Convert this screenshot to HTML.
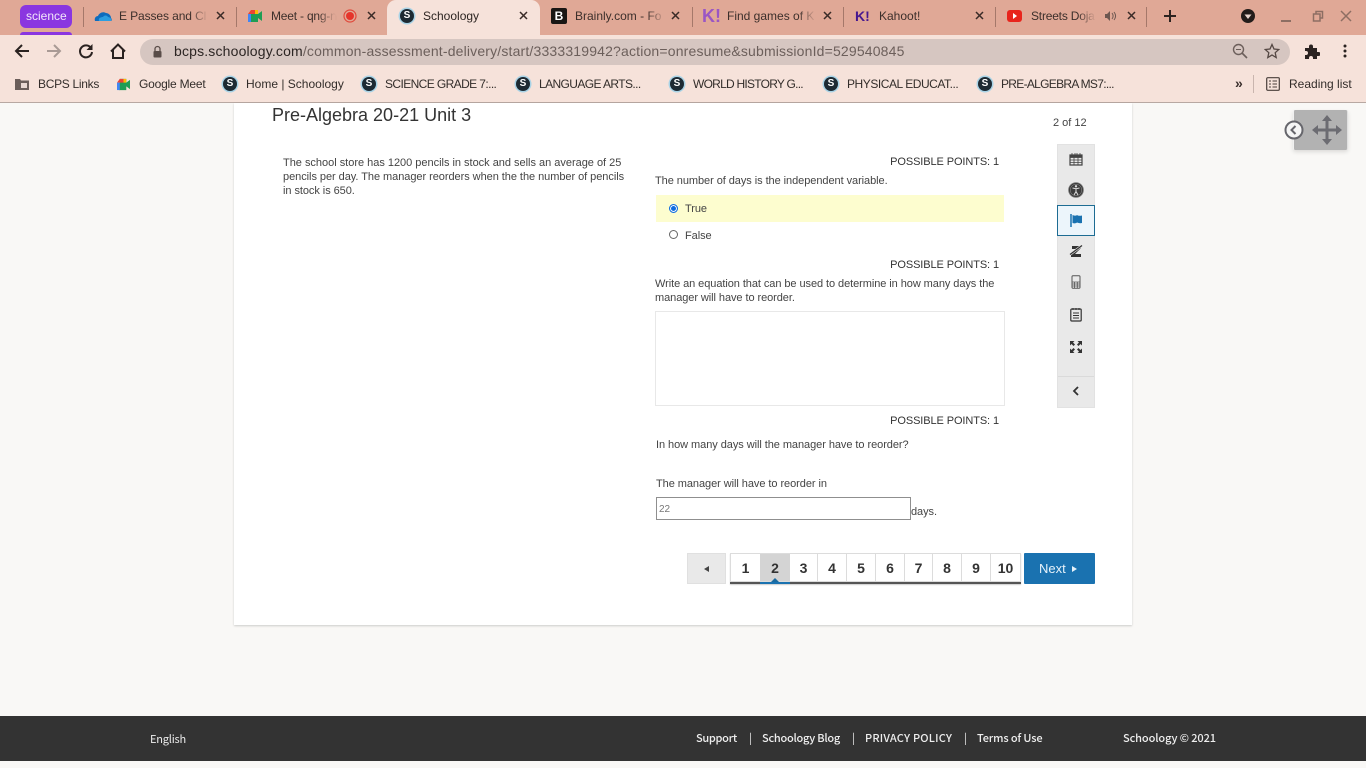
<!DOCTYPE html>
<html lang="en">
<head>
<meta charset="utf-8">
<title>Schoology</title>
<style>
*{box-sizing:border-box}
html,body{margin:0;padding:0;width:1366px;height:768px;overflow:hidden;background:#f9f8f6;font-family:"Liberation Sans",sans-serif;color:#333}
.a,.t,svg.i{position:absolute}
.t{white-space:nowrap;line-height:14px}
.tab{font-size:12px;color:#3c2f2b;top:9px}
.fade{position:absolute;top:4px;width:18px;height:24px;background:linear-gradient(to right,rgba(224,168,150,0),#e0a896)}
.x{position:absolute;top:10px;width:11px;height:11px}
.sep{position:absolute;top:7px;width:1px;height:20px;background:#a5786a}
.bm{font-size:12px;color:#332d2a;top:77px}
.s{position:absolute;width:14px;height:14px;border-radius:50%;background:#1d2a33;box-shadow:0 0 0 1.5px #a9d3e6;color:#fff;font:bold 10px/14px "Liberation Sans",sans-serif;text-align:center}
.q{font-size:11px;color:#444;line-height:14px;letter-spacing:-.06px}
.pp{font-size:11px;color:#333;text-align:right;left:800px;width:199px;letter-spacing:-.1px}
.pg{position:absolute;top:553px;height:29px;background:#fff;border:1px solid #dcdcdc;border-left:0;font:bold 14px/29px "Liberation Sans",sans-serif;color:#333;text-align:center}
.f{font:500 11px/14px "Noto Sans CJK JP","Liberation Sans",sans-serif;color:#eee;position:absolute;top:731px;white-space:nowrap}
</style>
</head>
<body>
<!-- tab strip -->
<div class="a" style="left:0;top:0;width:1366px;height:35px;background:#e0a896"></div>
<div class="a" style="left:20px;top:5px;width:52px;height:23px;border-radius:6px;background:#8a36e0"></div>
<div class="a" style="left:20px;top:32px;width:52px;height:3px;border-radius:3px 3px 0 0;background:#8a36e0"></div>
<div class="t" style="left:26px;top:9px;font-size:12px;color:#f3e6fb">science</div>
<div class="sep" style="left:83px"></div>
<svg class="i" style="left:94px;top:10px" width="18" height="12" viewBox="0 0 18 12"><path d="M1 11c-1-3 1-5 3-5 1-3 5-5 8-3 2 0 5 2 5 5 1 1 1 3 0 3z" fill="#0f6cbd"/><path d="M5 11c-1-3 2-4 4-4 1-2 4-2 5 0 2 0 4 2 3 4z" fill="#2c9ee0"/></svg>
<div class="t tab" style="left:119px;letter-spacing:-.1px">E Passes and Cl</div><div class="fade" style="left:190px"></div>
<svg class="x" style="left:215px" viewBox="0 0 11 11"><path d="M2 2l7 7M9 2l-7 7" stroke="#3a2b27" stroke-width="1.5"/></svg>
<div class="sep" style="left:236px"></div>
<svg class="i" style="left:247px;top:9px" width="16" height="14" viewBox="0 0 16 14"><path d="M4 1h7v4l4-3v10l-4-3v4H3z" fill="#1f9d55"/><path d="M4 1h4v4H1z" fill="#ea4335"/><path d="M8 1h3v4H8z" fill="#fbbc04"/><path d="M1 5h3v8H1z" fill="#4285f4"/></svg>
<div class="t tab" style="left:271px;letter-spacing:-.2px">Meet - qng-n</div><div class="fade" style="left:318px"></div>
<svg class="i" style="left:343px;top:9px" width="14" height="14" viewBox="0 0 14 14"><circle cx="7" cy="7" r="6" fill="none" stroke="#e04a3c" stroke-width="1.2"/><circle cx="7" cy="7" r="4" fill="#e5352b"/></svg>
<svg class="x" style="left:366px" viewBox="0 0 11 11"><path d="M2 2l7 7M9 2l-7 7" stroke="#3a2b27" stroke-width="1.5"/></svg>
<div class="a" style="left:387px;top:0;width:153px;height:36px;background:#f6e2da;border-radius:9px 9px 0 0"></div>
<div class="s" style="left:400px;top:9px">S</div>
<div class="t tab" style="left:423px;color:#2d2522">Schoology</div>
<svg class="x" style="left:518px" viewBox="0 0 11 11"><path d="M2 2l7 7M9 2l-7 7" stroke="#3a2b27" stroke-width="1.5"/></svg>
<div class="a" style="left:551px;top:8px;width:16px;height:16px;background:#1a1614;border-radius:2px;color:#fff;font:bold 12px/16px 'Liberation Sans',sans-serif;text-align:center">B</div>
<div class="t tab" style="left:575px">Brainly.com - Fo</div><div class="fade" style="left:647px"></div>
<svg class="x" style="left:670px" viewBox="0 0 11 11"><path d="M2 2l7 7M9 2l-7 7" stroke="#3a2b27" stroke-width="1.5"/></svg>
<div class="sep" style="left:692px"></div>
<div class="t" style="left:702px;top:7px;font:bold 18px/18px 'Liberation Sans',sans-serif;color:#9a56c4">K!</div>
<div class="t tab" style="left:727px">Find games of K</div><div class="fade" style="left:798px"></div>
<svg class="x" style="left:822px" viewBox="0 0 11 11"><path d="M2 2l7 7M9 2l-7 7" stroke="#3a2b27" stroke-width="1.5"/></svg>
<div class="sep" style="left:843px"></div>
<div class="t" style="left:855px;top:9px;font:bold 14px/14px 'Liberation Sans',sans-serif;color:#46178f">K!</div>
<div class="t tab" style="left:879px">Kahoot!</div>
<svg class="x" style="left:974px" viewBox="0 0 11 11"><path d="M2 2l7 7M9 2l-7 7" stroke="#3a2b27" stroke-width="1.5"/></svg>
<div class="sep" style="left:995px"></div>
<svg class="i" style="left:1007px;top:10px" width="15" height="12" viewBox="0 0 15 12"><rect width="15" height="12" rx="3" fill="#e8241c"/><path d="M6 3l4 3-4 3z" fill="#fff"/></svg>
<div class="t tab" style="left:1031px;letter-spacing:-.2px">Streets Doja</div><div class="fade" style="left:1078px"></div>
<svg class="i" style="left:1104px;top:10px" width="13" height="12" viewBox="0 0 13 12"><path d="M1 4h2l3-3v10L3 8H1z" fill="#6d5750"/><path d="M8 3c1.500 2 1.500 4 0 6M10 2c2 2.500 2 5.500 0 8" stroke="#6d5750" fill="none"/></svg>
<svg class="x" style="left:1126px" viewBox="0 0 11 11"><path d="M2 2l7 7M9 2l-7 7" stroke="#3a2b27" stroke-width="1.5"/></svg>
<div class="sep" style="left:1146px"></div>
<svg class="i" style="left:1163px;top:9px" width="14" height="14" viewBox="0 0 14 14"><path d="M7 1v12M1 7h12" stroke="#2c2320" stroke-width="2"/></svg>
<svg class="i" style="left:1241px;top:9px" width="14" height="14" viewBox="0 0 14 14"><circle cx="7" cy="7" r="7" fill="#231c1a"/><path d="M3.500 5.500h7L7 10z" fill="#e8d5ce"/></svg>
<div class="a" style="left:1281px;top:20px;width:10px;height:2px;background:#8d6e63"></div>
<svg class="i" style="left:1312px;top:10px" width="12" height="12" viewBox="0 0 12 12"><path d="M1.500 4h6.500v7H1.500z" fill="none" stroke="#8d6e63" stroke-width="1.500"/><path d="M4 4V1.500h6.500V8H8" fill="none" stroke="#8d6e63" stroke-width="1.500"/></svg>
<svg class="i" style="left:1340px;top:10px" width="12" height="12" viewBox="0 0 12 12"><path d="M1 1l10 10M11 1L1 11" stroke="#8d6e63" stroke-width="1.500"/></svg>

<!-- toolbar -->
<div class="a" style="left:0;top:35px;width:1366px;height:33px;background:#f6e2da"></div>
<svg class="i" style="left:13px;top:42px" width="18" height="18" viewBox="0 0 18 18"><path d="M16 9H3M9 3L3 9l6 6" fill="none" stroke="#2a2220" stroke-width="2"/></svg>
<svg class="i" style="left:45px;top:42px" width="18" height="18" viewBox="0 0 18 18"><path d="M2 9h13M9 3l6 6-6 6" fill="none" stroke="#a99a95" stroke-width="2"/></svg>
<svg class="i" style="left:77px;top:42px" width="18" height="18" viewBox="0 0 18 18"><path d="M14 6a6 6 0 1 0 1 4" fill="none" stroke="#2a2220" stroke-width="2"/><path d="M15.500 2v6h-6z" fill="#2a2220"/></svg>
<svg class="i" style="left:109px;top:42px" width="18" height="18" viewBox="0 0 18 18"><path d="M2 9.500L9 2.500l7 7M4 8v8h10V8" fill="none" stroke="#2a2220" stroke-width="2"/></svg>
<div class="a" style="left:140px;top:39px;width:1150px;height:26px;border-radius:13px;background:#d6c6c1"></div>
<svg class="i" style="left:152px;top:45px" width="11" height="13" viewBox="0 0 11 13"><path d="M3 6V4a2.500 2.500 0 0 1 5 0v2" fill="none" stroke="#5a4d49" stroke-width="1.300"/><rect x="1.500" y="6" width="8" height="6.500" rx="1" fill="#5a4d49"/></svg>
<div class="t" style="left:174px;top:44px;font-size:14px;letter-spacing:.17px;color:#6c5f5b"><span style="color:#2c2523">bcps.schoology.com</span>/common-assessment-delivery/start/3333319942?action=onresume&amp;submissionId=529540845</div>
<svg class="i" style="left:1232px;top:43px" width="16" height="16" viewBox="0 0 16 16"><circle cx="6.500" cy="6.500" r="5" fill="none" stroke="#6c5f5b" stroke-width="1.400"/><path d="M10 10l5 5" stroke="#6c5f5b" stroke-width="1.600"/><path d="M4 6.500h5" stroke="#6c5f5b"/></svg>
<svg class="i" style="left:1264px;top:43px" width="16" height="16" viewBox="0 0 16 16"><path d="M8 1.500l2 4.500 4.800.500-3.600 3.200 1 4.800L8 12l-4.200 2.500 1-4.800L1.200 6.500 6 6z" fill="none" stroke="#544743" stroke-width="1.300"/></svg>
<svg class="i" style="left:1304px;top:43px" width="16" height="16" viewBox="0 0 16 16"><path d="M1 5h4V3.500a2 2 0 0 1 4 0V5h4v4h1.500a2 2 0 0 1 0 4H13v3H9v-1a2 2 0 0 0-4 0v1H1v-4h1a2 2 0 0 0 0-4H1z" fill="#2a2220"/></svg>
<svg class="i" style="left:1342px;top:43px" width="6" height="16" viewBox="0 0 6 16"><circle cx="3" cy="3" r="1.500" fill="#2a2220"/><circle cx="3" cy="8" r="1.500" fill="#2a2220"/><circle cx="3" cy="13" r="1.500" fill="#2a2220"/></svg>

<!-- bookmarks -->
<div class="a" style="left:0;top:68px;width:1366px;height:35px;background:#f6e2da;border-bottom:1px solid #b8a8a2"></div>
<svg class="i" style="left:15px;top:78px" width="14" height="12" viewBox="0 0 14 12"><path d="M0 1h5l1 1.500h8V12H0z" fill="#6b5e5a"/><path d="M6 5h6v5H6z" fill="#e8d8d2"/></svg>
<div class="t bm" style="left:38px;letter-spacing:-.3px">BCPS Links</div>
<svg class="i" style="left:116px;top:78px" width="15" height="13" viewBox="0 0 16 14"><path d="M4 1h7v4l4-3v10l-4-3v4H3z" fill="#1f9d55"/><path d="M4 1h4v4H1z" fill="#ea4335"/><path d="M8 1h3v4H8z" fill="#fbbc04"/><path d="M1 5h3v8H1z" fill="#4285f4"/></svg>
<div class="t bm" style="left:139px;letter-spacing:-.2px">Google Meet</div>
<div class="s" style="left:223px;top:77px">S</div><div class="t bm" style="left:246px">Home | Schoology</div>
<div class="s" style="left:362px;top:77px">S</div><div class="t bm" style="left:385px;letter-spacing:-.6px">SCIENCE GRADE 7:...</div>
<div class="s" style="left:516px;top:77px">S</div><div class="t bm" style="left:539px;letter-spacing:-.6px">LANGUAGE ARTS...</div>
<div class="s" style="left:670px;top:77px">S</div><div class="t bm" style="left:693px;letter-spacing:-.75px">WORLD HISTORY G...</div>
<div class="s" style="left:824px;top:77px">S</div><div class="t bm" style="left:847px;letter-spacing:-.45px">PHYSICAL EDUCAT...</div>
<div class="s" style="left:978px;top:77px">S</div><div class="t bm" style="left:1001px;letter-spacing:-.7px">PRE-ALGEBRA MS7:...</div>
<div class="t" style="left:1235px;top:76px;font:bold 14px/14px 'Liberation Sans',sans-serif;color:#3a2f2c">»</div>
<div class="a" style="left:1253px;top:75px;width:1px;height:18px;background:#c9b5ae"></div>
<svg class="i" style="left:1266px;top:77px" width="14" height="14" viewBox="0 0 14 14"><rect x=".7" y=".7" width="12.600" height="12.600" rx="1" fill="none" stroke="#4a3f3b" stroke-width="1.200"/><path d="M3 4h2M3 7h2M3 10h2M6.500 4h4.500M6.500 7h4.500M6.500 10h4.500" stroke="#4a3f3b"/></svg>
<div class="t bm" style="left:1289px">Reading list</div>

<!-- card -->
<div class="a" style="left:234px;top:103px;width:898px;height:522px;background:#fff;box-shadow:0 1px 2px rgba(0,0,0,.18)"></div>
<div class="t" style="left:272px;top:105px;font-size:18px;line-height:20px;color:#333">Pre-Algebra 20-21 Unit 3</div>
<div class="t" style="left:1053px;top:116px;font-size:11px;color:#444">2 of 12</div>

<div class="a q" style="left:283px;top:156px;width:350px"><span style="letter-spacing:-.015px">The school store has 1200 pencils in stock and sells an average of 25</span><br><span style="letter-spacing:-.05px">pencils per day. The manager reorders when the the number of pencils</span><br>in stock is 650.</div>

<div class="a t pp" style="top:155px">POSSIBLE POINTS: 1</div>
<div class="t q" style="left:655px;top:174px">The number of days is the independent variable.</div>
<div class="a" style="left:656px;top:195px;width:348px;height:27px;background:#fdfdcf"></div>
<div class="a" style="left:669px;top:204px;width:9px;height:9px;border-radius:50%;background:#0d6be0;border:1px solid #0d6be0;box-shadow:inset 0 0 0 1px #fff"></div>
<div class="t q" style="left:685px;top:202px">True</div>
<div class="a" style="left:669px;top:230px;width:9px;height:9px;border-radius:50%;background:#fff;border:1px solid #666"></div>
<div class="t q" style="left:685px;top:229px">False</div>

<div class="a t pp" style="top:258px">POSSIBLE POINTS: 1</div>
<div class="a q" style="left:655px;top:277px;width:350px;letter-spacing:-.07px">Write an equation that can be used to determine in how many days the<br>manager will have to reorder.</div>
<div class="a" style="left:655px;top:311px;width:350px;height:95px;background:#fff;border:1px solid #e8e8e8"></div>

<div class="a t pp" style="top:414px">POSSIBLE POINTS: 1</div>
<div class="t q" style="left:656px;top:438px">In how many days will the manager have to reorder?</div>
<div class="t q" style="left:656px;top:477px">The manager will have to reorder in</div>
<div class="a" style="left:656px;top:497px;width:255px;height:23px;background:#fff;border:1px solid #8f8f8f;font-size:10px;line-height:23px;padding-left:2px;color:#777">22</div>
<div class="t q" style="left:911px;top:505px">days.</div>

<!-- pager -->
<div class="a" style="left:687px;top:553px;width:39px;height:31px;background:#e9e9e9;border:1px solid #e0e0e0"></div>
<div class="a" style="left:704px;top:566px;width:0;height:0;border-top:3px solid transparent;border-bottom:3px solid transparent;border-right:5px solid #444"></div>
<div class="a" style="left:730px;top:553px;width:291px;height:31px;border-bottom:2px solid #555;box-shadow:0 1px 1px rgba(0,0,0,.2)"></div>
<div class="pg" style="left:730px;width:30px;border-left:1px solid #dcdcdc;border-right:0">1</div>
<div class="pg" style="left:760px;width:30px;background:#d4d4d4;border-right:0">2</div>
<div class="a" style="left:760px;top:582px;width:30px;height:2px;background:#1a72b0"></div>
<div class="a" style="left:771px;top:578px;width:0;height:0;border-left:4px solid transparent;border-right:4px solid transparent;border-bottom:4px solid #1a6a9f"></div>
<div class="pg" style="left:790px;width:28px">3</div>
<div class="pg" style="left:818px;width:29px">4</div>
<div class="pg" style="left:847px;width:29px">5</div>
<div class="pg" style="left:876px;width:29px">6</div>
<div class="pg" style="left:905px;width:28px">7</div>
<div class="pg" style="left:933px;width:29px">8</div>
<div class="pg" style="left:962px;width:29px">9</div>
<div class="pg" style="left:991px;width:30px;border-right:1px solid #dcdcdc">10</div>
<div class="a" style="left:1024px;top:553px;width:71px;height:31px;background:#1a72b0;border-radius:1px"></div>
<div class="t" style="left:1039px;top:562px;font-size:13px;color:#e6f2fa">Next</div>
<div class="a" style="left:1072px;top:566px;width:0;height:0;border-top:3px solid transparent;border-bottom:3px solid transparent;border-left:5px solid #e6f2fa"></div>

<!-- side tools -->
<div class="a" style="left:1057px;top:144px;width:38px;height:264px;background:#e9e9e9;border:1px solid #e2e2e2"></div>
<div class="a" style="left:1057px;top:205px;width:38px;height:31px;background:#ecf5fb;border:1px solid #1d6c93"></div>
<div class="a" style="left:1058px;top:376px;width:36px;height:1px;background:#dadada"></div>
<svg class="i" style="left:1069px;top:152px" width="14" height="14" viewBox="0 0 14 14"><path d="M1 3h12v10H1z" fill="none" stroke="#444" stroke-width="1.200"/><path d="M1 3h12v2.500H1zM3 1v2M6 1v2M8 1v2M11 1v2M1 8h12M1 10.500h12M5 5v8M9 5v8" stroke="#444" fill="#444" stroke-width=".8"/></svg>
<svg class="i" style="left:1068px;top:182px" width="16" height="16" viewBox="0 0 16 16"><circle cx="8" cy="8" r="7.400" fill="#3c3c3c" stroke="#777" stroke-width=".8"/><circle cx="8" cy="8" r="5.800" fill="none" stroke="#999" stroke-width=".5"/><circle cx="8" cy="4.300" r="1.200" fill="#ddd"/><path d="M4.500 6l3.500.7L11.500 6M8 6.500v3M8 9.500l-2 3.500M8 9.500l2 3.500" stroke="#ddd" stroke-width="1" fill="none"/></svg>
<svg class="i" style="left:1069px;top:213px" width="14" height="15" viewBox="0 0 14 15"><path d="M2 1v13" stroke="#1a72b0" stroke-width="1.500"/><path d="M3.500 2c2 1 4 .8 4.500 0 1 .8 3 1 5 .5v7.500c-2 .5-3.500 0-5-.5-1 1-3 1-4.500.5z" fill="#1a72b0"/></svg>
<svg class="i" style="left:1069px;top:244px" width="14" height="14" viewBox="0 0 14 14"><path d="M3 2h9v2L6 10h6v3H2v-2.500L8 5H3z" fill="#333"/><path d="M1 10.500L13 1.500" stroke="#e9e9e9" stroke-width="2.500"/><path d="M1 10.500L13 1.500" stroke="#333" stroke-width="1.300"/></svg>
<svg class="i" style="left:1071px;top:275px" width="10" height="14" viewBox="0 0 10 14"><rect x="1" y=".7" width="8" height="12.600" rx="1" fill="none" stroke="#555"/><path d="M1 7h8M1 9h8M1 11h8M3.600 7v6M6.300 7v6" stroke="#555" stroke-width=".8"/></svg>
<svg class="i" style="left:1070px;top:307px" width="12" height="15" viewBox="0 0 12 15"><rect x=".8" y="2" width="10.400" height="12" rx="1" fill="none" stroke="#333" stroke-width="1.200"/><path d="M3 1v2M6 1v2M9 1v2M3 6h6M3 8.500h6M3 11h6" stroke="#333"/></svg>
<svg class="i" style="left:1069px;top:340px" width="14" height="14" viewBox="0 0 14 14"><g fill="#333"><path d="M1 1h4.500L4 2.500 6 4.500 4.500 6l-2-2L1 5.500zM13 1v4.500L11.500 4l-2 2L8 4.500l2-2L8.500 1zM1 13V8.500L2.500 10l2-2L6 9.500l-2 2L5.500 13zM13 13H8.500l1.500-1.500-2-2L9.500 8l2 2L13 8.500z"/></g></svg>
<svg class="i" style="left:1071px;top:386px" width="10" height="10" viewBox="0 0 10 10"><path d="M7 1L3 5l4 4" fill="none" stroke="#333" stroke-width="1.800"/></svg>

<!-- floating move -->
<div class="a" style="left:1293px;top:110px;width:55px;height:40px;background:#b2b2b2;border-left:1px solid #f0f0f0;border-right:1px solid #e0e0e0;border-radius:2px;box-shadow:0 2px 4px rgba(0,0,0,.12)"></div>
<svg class="i" style="left:1311px;top:113px" width="32" height="34" viewBox="0 0 32 34"><path d="M16 2l5 6h-3.500v7.500H25V12l6 5-6 5v-3.500h-7.500V26H21l-5 6-5-6h3.500v-7.500H7V22l-6-5 6-5v3.500h7.500V8H11z" fill="#6c6c72"/></svg>
<svg class="i" style="left:1284px;top:120px" width="20" height="20" viewBox="0 0 20 20"><circle cx="10" cy="10" r="8.500" fill="#f5f5f5" stroke="#66666c" stroke-width="2"/><path d="M11.500 6l-4 4 4 4" fill="none" stroke="#66666c" stroke-width="2"/></svg>

<!-- footer -->
<div class="a" style="left:0;top:716px;width:1366px;height:45px;background:#333"></div>
<div class="f" style="left:150px;top:732px;font-weight:400;letter-spacing:-.2px">English</div>
<div class="f" style="left:696px;letter-spacing:-.3px">Support</div>
<div class="f" style="left:749px;font-weight:400">|</div>
<div class="f" style="left:762px;letter-spacing:-.25px">Schoology Blog</div>
<div class="f" style="left:852px;font-weight:400">|</div>
<div class="f" style="left:865px;letter-spacing:.2px">PRIVACY POLICY</div>
<div class="f" style="left:964px;font-weight:400">|</div>
<div class="f" style="left:977px;letter-spacing:-.15px">Terms of Use</div>
<div class="f" style="left:1123px;letter-spacing:-.1px">Schoology © 2021</div>
</body>
</html>
